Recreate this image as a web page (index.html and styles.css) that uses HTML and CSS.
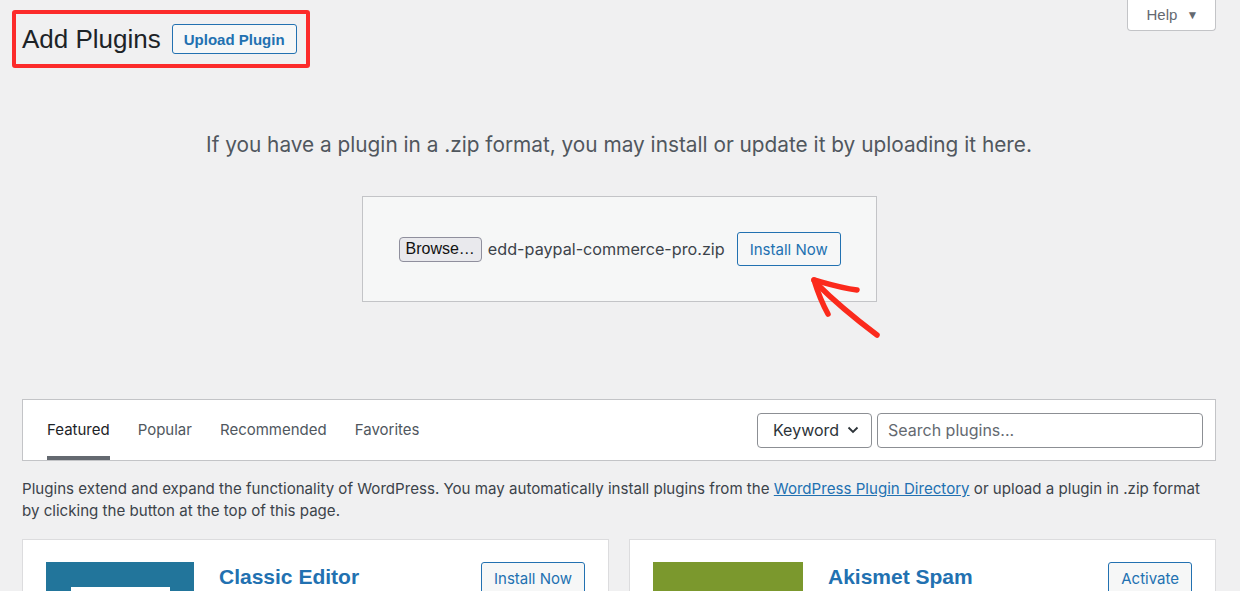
FILE: index.html
```html
<!DOCTYPE html>
<html lang="en">
<head>
<meta charset="utf-8">
<title>Add Plugins</title>
<link rel="stylesheet" href="styles.css">
</head>
<body>
<div class="page">
  <div class="top-row">
    <div class="title-box">
      <h1 class="page-title">Add Plugins</h1>
      <button class="btn btn-upload">Upload Plugin</button>
    </div>
    <button class="help-tab">Help <span class="help-arrow">&#9660;</span></button>
  </div>

  <p class="upload-intro">If you have a plugin in a .zip format, you may install or update it by uploading it here.</p>

  <div class="upload-box">
    <span class="browse">Browse…</span>
    <span class="file-name">edd-paypal-commerce-pro.zip</span>
    <button class="btn btn-install">Install Now</button>
  </div>

  <svg class="annot-arrow" width="95" height="80" viewBox="0 0 95 80" aria-hidden="true">
    <path d="M19 15 C 30 18, 45 23, 62 25" fill="none" stroke="#fb2a1c" stroke-width="5.5" stroke-linecap="round"/>
    <path d="M19 15 C 23 28, 28 40, 33 49" fill="none" stroke="#fb2a1c" stroke-width="5.5" stroke-linecap="round"/>
    <path d="M21 18 C 38 35, 62 55, 82 70" fill="none" stroke="#fb2a1c" stroke-width="5.5" stroke-linecap="round"/>
  </svg>

  <div class="filter-bar">
    <ul class="tabs">
      <li class="tab current">Featured</li>
      <li class="tab">Popular</li>
      <li class="tab">Recommended</li>
      <li class="tab">Favorites</li>
    </ul>
    <div class="search-form">
      <div class="select">Keyword
        <svg class="chev" width="12" height="8" viewBox="0 0 12 8"><path d="M1.5 1.5 L6 6 L10.5 1.5" fill="none" stroke="#2c3338" stroke-width="1.8"/></svg>
      </div>
      <div class="search-input">Search plugins...</div>
    </div>
  </div>

  <p class="desc">Plugins extend and expand the functionality of WordPress. You may automatically install plugins from the <a href="#">WordPress Plugin Directory</a> or upload a plugin in .zip format<br>by clicking the button at the top of this page.</p>

  <div class="cards">
    <div class="card">
      <div class="card-icon icon-classic">
        <svg width="148" height="148" viewBox="0 0 148 148"><rect x="0" y="0" width="148" height="148" fill="#22759b"/><rect x="25" y="25" width="99" height="80" fill="#ffffff"/></svg>
      </div>
      <div class="card-body"><h3 class="card-title">Classic Editor</h3></div>
      <button class="btn btn-card">Install Now</button>
    </div>
    <div class="card">
      <div class="card-icon icon-akismet">
        <svg width="150" height="148" viewBox="0 0 150 148"><rect x="0" y="0" width="150" height="148" fill="#7b982d"/></svg>
      </div>
      <div class="card-body"><h3 class="card-title">Akismet Spam</h3></div>
      <button class="btn btn-card">Activate</button>
    </div>
  </div>
</div>
</body>
</html>
```
FILE: styles.css
```css
html, body {
  margin: 0;
  padding: 0;
  background: #f0f0f1;
  font-family: "Liberation Sans", Arial, sans-serif;
  color: #3c434a;
  overflow: hidden;
}

.page {
  position: relative;
  padding: 0 24px 0 22px;
}

.top-row {
  display: flex;
  justify-content: space-between;
  align-items: flex-start;
  margin-left: -10px;
}

.title-box {
  display: flex;
  align-items: center;
  gap: 11px;
  height: 58px;
  box-sizing: border-box;
  margin-top: 10px;
  padding: 0 9px 0 6px;
  border: 4px solid #fc2b2b;
  border-radius: 3px;
}

.page-title {
  margin: 0;
  font-size: 26px;
  font-weight: 400;
  color: #1d2327;
  line-height: 1;
}

.btn {
  font-family: "Liberation Sans", Arial, sans-serif;
  background: #f6f7f7;
  border: 1px solid #2271b1;
  border-radius: 3px;
  color: #2271b1;
  cursor: pointer;
  box-sizing: border-box;
}

.btn-upload {
  height: 30px;
  padding: 0 11px;
  font-size: 15px;
  font-weight: 700;
}

.help-tab {
  height: 31px;
  width: 89px;
  box-sizing: border-box;
  background: #ffffff;
  border: 1px solid #c3c4c7;
  border-top: none;
  border-radius: 0 0 4px 4px;
  color: #646970;
  font-family: "Liberation Sans", Arial, sans-serif;
  font-size: 15px;
  padding: 0 0 2px 2px;
}

.help-arrow {
  font-size: 12px;
  margin-left: 5px;
  position: relative;
  top: -1px;
}

.upload-intro {
  margin: 63px 0 0;
  text-align: center;
  font-family: Inter, "Liberation Sans", sans-serif;
  font-size: 20.8px;
  line-height: 28px;
  color: #50575e;
}

.upload-box {
  width: 515px;
  height: 106px;
  box-sizing: border-box;
  margin: 37px auto 0;
  background: #f6f7f7;
  border: 1px solid #c3c4c7;
  display: flex;
  align-items: center;
  padding: 0 0 0 36px;
}

.browse {
  height: 25px;
  box-sizing: border-box;
  display: inline-flex;
  align-items: center;
  padding: 0 6px;
  background: #e9e9ed;
  border: 1px solid #8f8f9d;
  border-radius: 4px;
  font-size: 16px;
  color: #111;
}

.file-name {
  margin-left: 6px;
  font-family: Inter, "Liberation Sans", sans-serif;
  font-size: 16.2px;
  color: #3c434a;
}

.btn-install {
  margin-left: 12px;
  height: 34px;
  padding: 0 12px;
  font-family: Inter, "Liberation Sans", sans-serif;
  font-size: 15px;
}

.annot-arrow {
  position: absolute;
  left: 795px;
  top: 265px;
}

.filter-bar {
  margin-top: 97px;
  height: 62px;
  box-sizing: border-box;
  background: #ffffff;
  border: 1px solid #c3c4c7;
  display: flex;
  justify-content: space-between;
  align-items: center;
  padding: 0 12px 0 24px;
}

.tabs {
  list-style: none;
  margin: 0;
  padding: 0;
  display: flex;
  gap: 28px;
  align-self: stretch;
}

.tab {
  padding: 18px 0 14px;
  line-height: 24px;
  font-family: Inter, "Liberation Sans", sans-serif;
  font-size: 15px;
  color: #50575e;
  border-bottom: 4px solid transparent;
}

.tab.current {
  color: #1d2327;
  border-bottom-color: #646970;
}

.search-form {
  display: flex;
  gap: 5px;
}

.select {
  width: 115px;
  height: 35px;
  box-sizing: border-box;
  border: 1px solid #8c8f94;
  border-radius: 4px;
  display: flex;
  align-items: center;
  justify-content: space-between;
  padding: 0 12px 0 15px;
  font-family: Inter, "Liberation Sans", sans-serif;
  font-size: 16px;
  color: #2c3338;
}

.search-input {
  width: 326px;
  height: 35px;
  box-sizing: border-box;
  border: 1px solid #8c8f94;
  border-radius: 4px;
  display: flex;
  align-items: center;
  padding: 0 10px;
  font-family: Inter, "Liberation Sans", sans-serif;
  font-size: 16px;
  color: #646970;
}

.desc {
  margin: 17px 0 0;
  font-family: Inter, "Liberation Sans", sans-serif;
  font-size: 15.1px;
  line-height: 22px;
  color: #3c434a;
}

.desc a {
  color: #2271b1;
}

.cards {
  display: grid;
  grid-template-columns: 1fr 1fr;
  gap: 20px;
  margin-top: 17px;
}

.card {
  background: #ffffff;
  border: 1px solid #dcdcde;
  height: 200px;
  box-sizing: border-box;
  display: flex;
  align-items: flex-start;
  padding: 22px 23px 0 23px;
}

.card-icon {
  flex: none;
  line-height: 0;
}

.card-body {
  flex: 1;
  padding-left: 25px;
}

.card-title {
  margin: 0;
  padding-top: 3px;
  font-size: 21px;
  font-weight: 700;
  color: #2271b1;
  line-height: 24px;
}

.btn-card {
  flex: none;
  height: 32px;
  padding: 0 12px;
  font-family: Inter, "Liberation Sans", sans-serif;
  font-size: 15px;
  margin-top: 0;
}
```
